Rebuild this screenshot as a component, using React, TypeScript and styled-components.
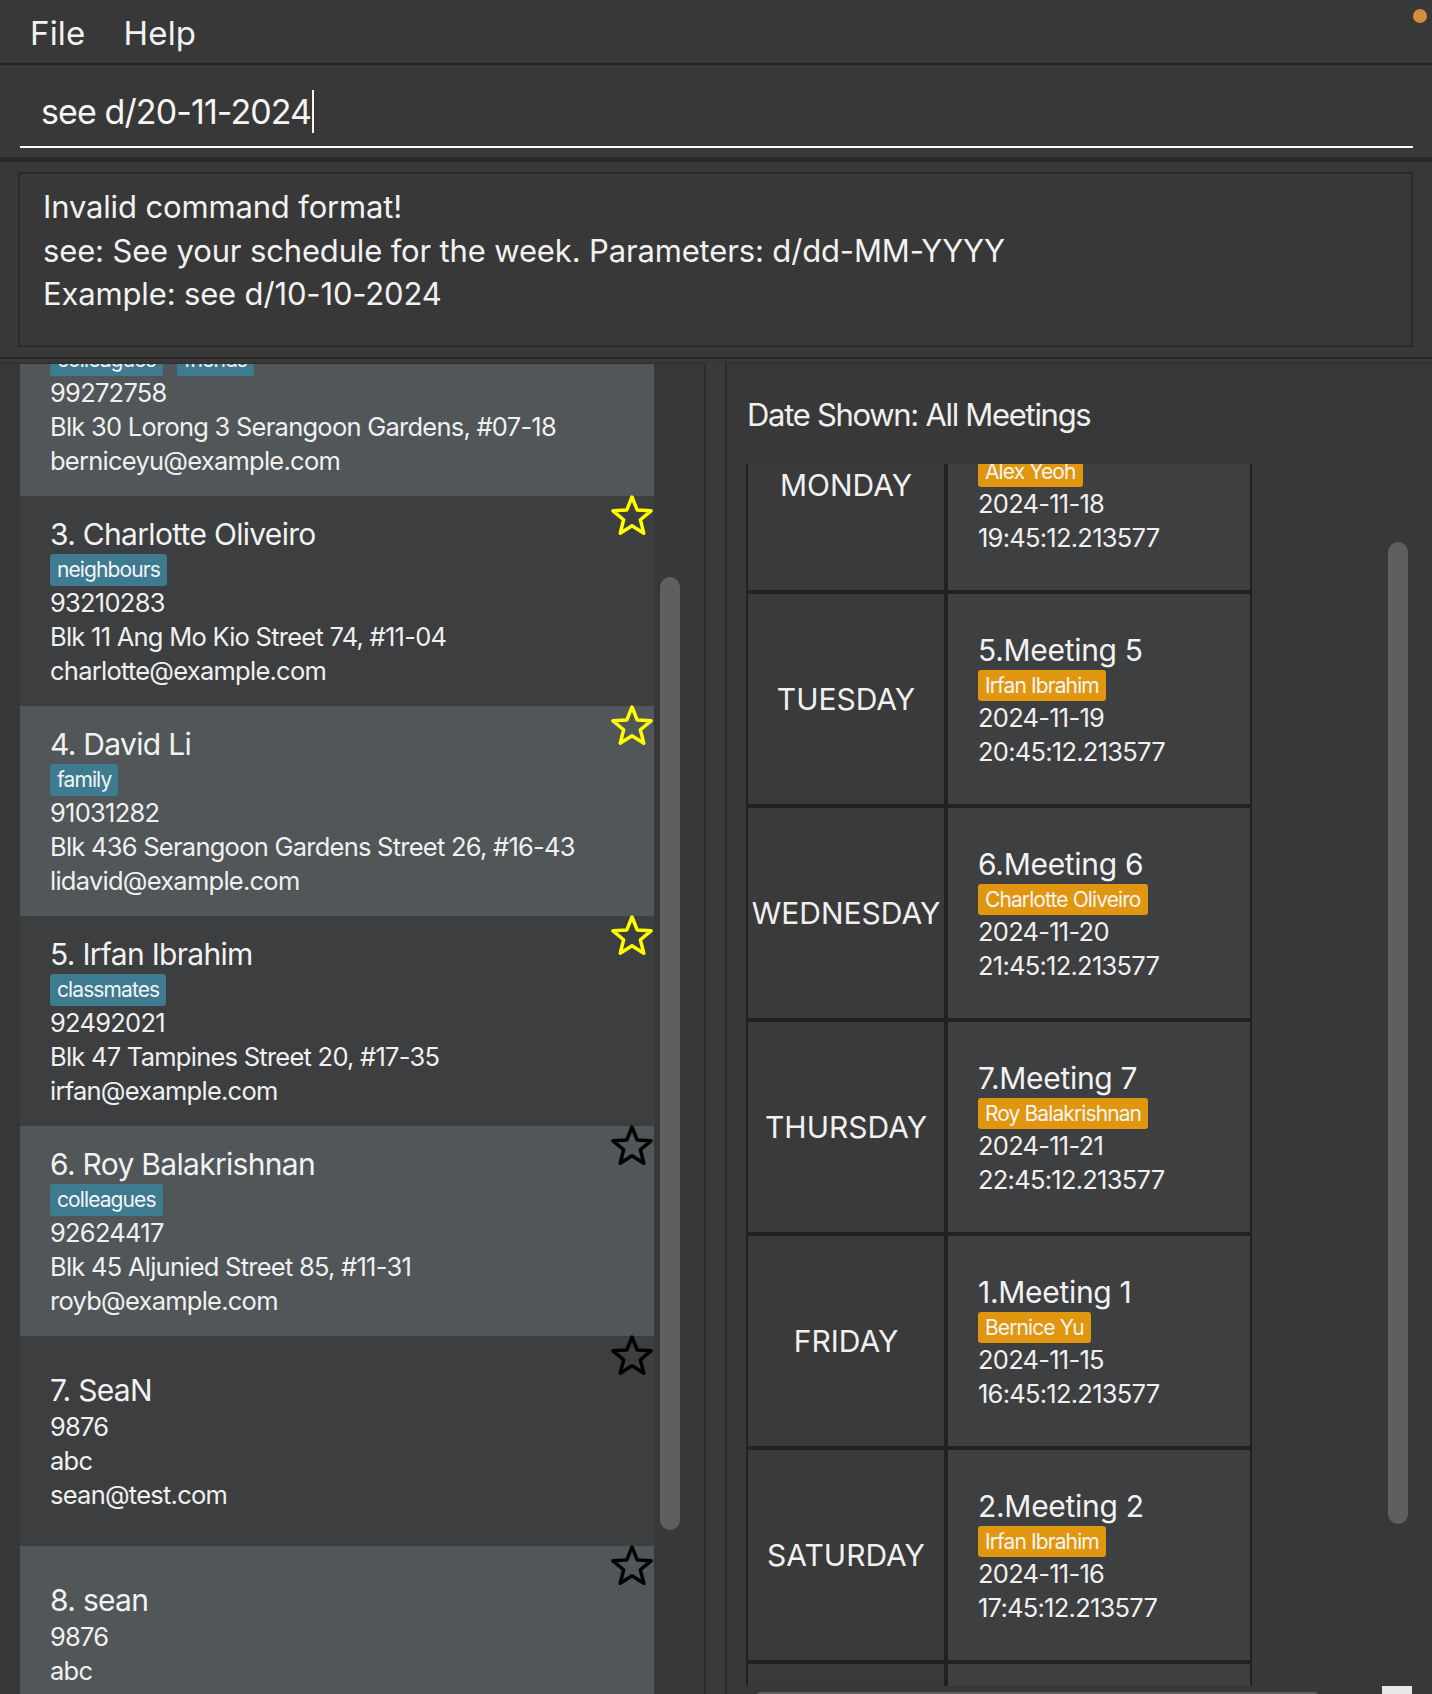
import React, { useLayoutEffect, useRef } from "react";
import styled, { createGlobalStyle } from "styled-components";

const GlobalStyle = createGlobalStyle`
  html, body { margin: 0; padding: 0; background: #383838; }
  body { font-family: Inter, "Noto Sans", sans-serif; color: #f0f0f0; }
  * { box-sizing: border-box; }
`;

const Window = styled.div`
  width: 1432px;
  height: 1694px;
  display: flex;
  flex-direction: column;
  background: #383838;
  overflow: hidden;
`;

const MenuBar = styled.div`
  height: 65px;
  flex: none;
  display: flex;
  align-items: center;
  padding: 3px 0 0 11px;
  border-bottom: 2px solid #262626;
`;

const MenuItem = styled.span`
  padding: 0 19px;
  font-size: 33px;
  letter-spacing: 0.2px;
  color: #f2f2f2;
`;

const StatusDot = styled.span`
  margin-left: auto;
  margin-right: 5px;
  align-self: flex-start;
  margin-top: 6px;
  width: 14px;
  height: 14px;
  border-radius: 50%;
  background: #d58f3c;
`;

const CommandArea = styled.div`
  height: 92px;
  flex: none;
  padding: 10px 19px 0 20px;
`;

const CommandField = styled.div`
  height: 73px;
  display: flex;
  align-items: center;
  padding: 2px 0 0 21px;
  border-bottom: 2px solid #ffffff;
  font-size: 34px;
  letter-spacing: -0.9px;
  color: #f5f5f5;
`;

const Caret = styled.span`
  display: inline-block;
  width: 2px;
  height: 43px;
  background: #f5f5f5;
  margin-left: 1px;
`;

const Separator = styled.div<{ $h: number }>`
  height: ${(p) => p.$h}px;
  flex: none;
  background: #2a2a2a;
`;

const ResultArea = styled.div`
  height: 195px;
  flex: none;
  padding: 10px 19px 10px 18px;
`;

const ResultBox = styled.div`
  height: 100%;
  border: 2px solid #2b2b2b;
  padding: 11px 23px;
  font-size: 31px;
  line-height: 43.5px;
  letter-spacing: -0.15px;
  white-space: pre-line;
  color: #f2f2f2;
`;

const Main = styled.div`
  flex: 1;
  min-height: 0;
  display: flex;
  padding-top: 4px;
`;

const LeftPanel = styled.div`
  width: 706px;
  flex: none;
  display: flex;
  padding-left: 20px;
  border-right: 2px solid #2b2b2b;
  border-top: 1px solid #2e2e2e;
`;

const ListViewport = styled.div`
  width: 634px;
  flex: none;
  height: 100%;
  overflow: hidden;
`;

const ScrollTrack = styled.div<{ $pad: number }>`
  flex: 1;
  padding-left: ${(p) => p.$pad}px;
`;

const VThumb = styled.div<{ $top: number; $h: number }>`
  width: 20px;
  margin-top: ${(p) => p.$top}px;
  height: ${(p) => p.$h}px;
  border-radius: 10px;
  background: #5f5f5f;
`;

const SplitDivider = styled.div`
  width: 19px;
  flex: none;
  background: #3a3a3a;
`;

const RightPanel = styled.div`
  flex: 1;
  min-width: 0;
  display: flex;
  flex-direction: column;
  padding: 0 20px 0 19px;
  border-left: 2px solid #2b2b2b;
  border-top: 1px solid #2e2e2e;
`;

const PanelTitle = styled.div`
  height: 100px;
  flex: none;
  display: flex;
  align-items: center;
  padding-left: 1px;
  font-size: 31px;
  letter-spacing: -1.3px;
  color: #f0f0f0;
`;

const ScrollPane = styled.div`
  flex: 1;
  min-height: 0;
  display: flex;
  flex-direction: column;
`;

const PaneBody = styled.div`
  flex: 1;
  min-height: 0;
  display: flex;
`;

const TableViewport = styled.div`
  width: 506px;
  flex: none;
  height: 100%;
  overflow: hidden;
`;

const VTrack = styled.div`
  margin-left: auto;
  width: 28px;
  padding-left: 4px;
`;

const PaneFooter = styled.div`
  height: 8px;
  flex: none;
  display: flex;
`;

const HThumb = styled.div`
  margin: 6px 0 0 10px;
  width: 563px;
  height: 10px;
  border-radius: 5px;
  background: #5f5f5f;
`;

const Corner = styled.div`
  margin-left: auto;
  width: 30px;
  background: #e8e8e8;
`;

/* person list */
const Card = styled.div<{ $light: boolean }>`
  position: relative;
  height: 210px;
  display: flex;
  flex-direction: column;
  justify-content: center;
  padding: 18px 0 18px 30px;
  background: ${(p) => (p.$light ? "#515658" : "#3c3e3f")};
`;

const Name = styled.div`
  font-size: 30px;
  line-height: 40px;
  letter-spacing: -0.7px;
  color: #f2f2f2;
`;

const TagRow = styled.div`
  display: flex;
  gap: 14px;
`;

const Tag = styled.span<{ $bg: string; $h: number }>`
  height: ${(p) => p.$h}px;
  line-height: ${(p) => p.$h}px;
  padding: 0 7px;
  border-radius: 3px;
  background: ${(p) => p.$bg};
  font-size: 21px;
  letter-spacing: -0.9px;
  color: #f4f4f4;
`;

const Detail = styled.div`
  font-size: 25.5px;
  line-height: 34px;
  letter-spacing: -0.75px;
  color: #f0f0f0;
`;

const StarBox = styled.svg`
  position: absolute;
  top: -1px;
  right: 1px;
  width: 42px;
  height: 42px;
`;

/* schedule */
const ScheduleGrid = styled.div`
  display: grid;
  grid-template-columns: 200px 306px;
  grid-auto-rows: 214px;
`;

const DayCell = styled.div`
  border: 2px solid #212121;
  background: #3a3a3a;
  display: flex;
  align-items: center;
  justify-content: center;
  font-size: 30px;
  color: #f0f0f0;
`;

const MeetingCell = styled.div`
  border: 2px solid #212121;
  background: #3e3f41;
  display: flex;
  flex-direction: column;
  justify-content: center;
  align-items: flex-start;
  padding-left: 30px;
`;

const MeetingTitle = styled.div`
  font-size: 30px;
  line-height: 40px;
  letter-spacing: -0.3px;
  color: #f2f2f2;
`;

const STAR_PATH =
  "M21 2 L26.17 14.88 L40.02 15.82 L29.37 24.72 L32.76 38.18 L21 30.8 L9.24 38.18 L12.63 24.72 L1.98 15.82 L15.83 14.88 Z";

function Star({ fav }: { fav: boolean }) {
  return (
    <StarBox viewBox="0 0 42 42">
      <path
        d={STAR_PATH}
        fill="none"
        stroke={fav ? "#ffff00" : "#000000"}
        strokeWidth={3.5}
        strokeLinejoin="round"
      />
    </StarBox>
  );
}

type Person = {
  index: number;
  name: string;
  tags: string[];
  phone: string;
  address: string;
  email: string;
  fav: boolean;
};

const persons: Person[] = [
  { index: 2, name: "Bernice Yu", tags: ["colleagues", "friends"], phone: "99272758", address: "Blk 30 Lorong 3 Serangoon Gardens, #07-18", email: "berniceyu@example.com", fav: false },
  { index: 3, name: "Charlotte Oliveiro", tags: ["neighbours"], phone: "93210283", address: "Blk 11 Ang Mo Kio Street 74, #11-04", email: "charlotte@example.com", fav: true },
  { index: 4, name: "David Li", tags: ["family"], phone: "91031282", address: "Blk 436 Serangoon Gardens Street 26, #16-43", email: "lidavid@example.com", fav: true },
  { index: 5, name: "Irfan Ibrahim", tags: ["classmates"], phone: "92492021", address: "Blk 47 Tampines Street 20, #17-35", email: "irfan@example.com", fav: true },
  { index: 6, name: "Roy Balakrishnan", tags: ["colleagues"], phone: "92624417", address: "Blk 45 Aljunied Street 85, #11-31", email: "royb@example.com", fav: false },
  { index: 7, name: "SeaN", tags: [], phone: "9876", address: "abc", email: "sean@test.com", fav: false },
  { index: 8, name: "sean", tags: [], phone: "9876", address: "abc", email: "sean@test.com", fav: false },
];

type Meeting = { day: string; title: string; person: string; date: string; time: string };

const meetings: Meeting[] = [
  { day: "MONDAY", title: "4.Meeting 4", person: "Alex Yeoh", date: "2024-11-18", time: "19:45:12.213577" },
  { day: "TUESDAY", title: "5.Meeting 5", person: "Irfan Ibrahim", date: "2024-11-19", time: "20:45:12.213577" },
  { day: "WEDNESDAY", title: "6.Meeting 6", person: "Charlotte Oliveiro", date: "2024-11-20", time: "21:45:12.213577" },
  { day: "THURSDAY", title: "7.Meeting 7", person: "Roy Balakrishnan", date: "2024-11-21", time: "22:45:12.213577" },
  { day: "FRIDAY", title: "1.Meeting 1", person: "Bernice Yu", date: "2024-11-15", time: "16:45:12.213577" },
  { day: "SATURDAY", title: "2.Meeting 2", person: "Irfan Ibrahim", date: "2024-11-16", time: "17:45:12.213577" },
  { day: "SUNDAY", title: "3.Meeting 3", person: "Charlotte Oliveiro", date: "2024-11-17", time: "18:45:12.213577" },
];

export default function App() {
  const listRef = useRef<HTMLDivElement>(null);
  const tableRef = useRef<HTMLDivElement>(null);

  useLayoutEffect(() => {
    if (listRef.current) listRef.current.scrollTop = 78;
    if (tableRef.current) tableRef.current.scrollTop = 86;
  }, []);

  return (
    <>
      <GlobalStyle />
      <Window>
        <MenuBar>
          <MenuItem>File</MenuItem>
          <MenuItem>Help</MenuItem>
          <StatusDot />
        </MenuBar>
        <CommandArea>
          <CommandField>
            see d/20-11-2024
            <Caret />
          </CommandField>
        </CommandArea>
        <Separator $h={5} />
        <ResultArea>
          <ResultBox>
            {"Invalid command format!\nsee: See your schedule for the week. Parameters: d/dd-MM-YYYY\nExample: see d/10-10-2024"}
          </ResultBox>
        </ResultArea>
        <Separator $h={2} />
        <Main>
          <LeftPanel>
            <ListViewport ref={listRef}>
              {persons.map((p) => (
                <Card key={p.index} $light={p.index % 2 === 0}>
                  <Name>
                    {p.index}. {p.name}
                  </Name>
                  {p.tags.length > 0 && (
                    <TagRow>
                      {p.tags.map((t) => (
                        <Tag key={t} $bg="#3e7b91" $h={32}>
                          {t}
                        </Tag>
                      ))}
                    </TagRow>
                  )}
                  <Detail>{p.phone}</Detail>
                  <Detail>{p.address}</Detail>
                  <Detail>{p.email}</Detail>
                  <Star fav={p.fav} />
                </Card>
              ))}
            </ListViewport>
            <ScrollTrack $pad={6}>
              <VThumb $top={213} $h={953} />
            </ScrollTrack>
          </LeftPanel>
          <SplitDivider />
          <RightPanel>
            <PanelTitle>Date Shown: All Meetings</PanelTitle>
            <ScrollPane>
              <PaneBody>
                <TableViewport ref={tableRef}>
                  <ScheduleGrid>
                    {meetings.map((m) => (
                      <React.Fragment key={m.day}>
                        <DayCell>{m.day}</DayCell>
                        <MeetingCell>
                          <MeetingTitle>{m.title}</MeetingTitle>
                          <Tag $bg="#e0960e" $h={31}>
                            {m.person}
                          </Tag>
                          <Detail>{m.date}</Detail>
                          <Detail>{m.time}</Detail>
                        </MeetingCell>
                      </React.Fragment>
                    ))}
                  </ScheduleGrid>
                </TableViewport>
                <VTrack>
                  <VThumb $top={78} $h={982} />
                </VTrack>
              </PaneBody>
              <PaneFooter>
                <HThumb />
                <Corner />
              </PaneFooter>
            </ScrollPane>
          </RightPanel>
        </Main>
      </Window>
    </>
  );
}
